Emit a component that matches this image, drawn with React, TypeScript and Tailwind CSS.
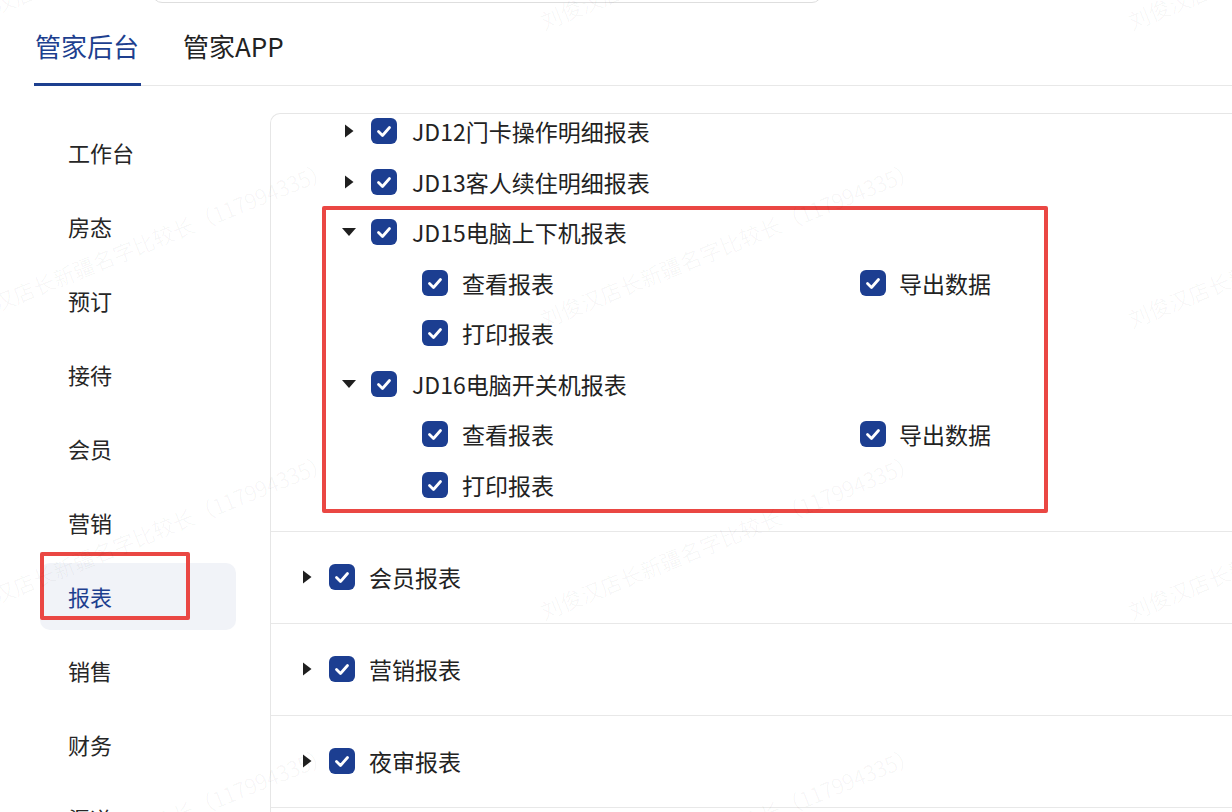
import React from "react";

const FONT = "font-['Noto_Sans_CJK_SC','Noto_Sans',sans-serif]";

function Check() {
  return (
    <div className="w-[26px] h-[26px] rounded-[6px] bg-[#1c3e91] flex items-center justify-center shrink-0">
      <svg width="26" height="26" viewBox="0 0 26 26">
        <polyline points="7.5,13.5 11.5,17.5 18.5,9.5" fill="none" stroke="white" strokeWidth="2.8" strokeLinecap="round" strokeLinejoin="round" />
      </svg>
    </div>
  );
}

function Tri({ down }: { down?: boolean }) {
  return (
    <div className="w-[16px] h-[16px] flex items-center justify-center shrink-0">
      {down ? (
        <svg width="16" height="10" viewBox="0 0 16 10"><polygon points="1,1 15,1 8,9" fill="#1f1f1f" /></svg>
      ) : (
        <svg width="10" height="14" viewBox="0 0 10 14"><polygon points="1,0.5 9.5,7 1,13.5" fill="#1f1f1f" /></svg>
      )}
    </div>
  );
}

function L2Row({ label, down }: { label: string; down?: boolean }) {
  return (
    <div className="h-[50.5px] flex items-center pl-[70px]">
      <Tri down={down} />
      <div className="ml-[14px]"><Check /></div>
      <span className="ml-[15px] text-[23px] text-[#222]">{label}</span>
    </div>
  );
}

function ChildRow({ a, b }: { a: string; b?: string }) {
  return (
    <div className="h-[50.5px] flex items-center pl-[151px]">
      <div className="w-[438px] flex items-center">
        <Check />
        <span className="ml-[14px] text-[23px] text-[#222]">{a}</span>
      </div>
      {b && (
        <div className="flex items-center">
          <Check />
          <span className="ml-[13px] text-[23px] text-[#222]">{b}</span>
        </div>
      )}
    </div>
  );
}

function L1Group({ label }: { label: string }) {
  return (
    <div className="h-[92px] border-b border-[#e8e8e8] flex items-center pl-[28px] pb-[1px]">
      <Tri />
      <div className="ml-[14px]"><Check /></div>
      <span className="ml-[14px] text-[23px] text-[#222]">{label}</span>
    </div>
  );
}

const sideItems = ["工作台", "房态", "预订", "接待", "会员", "营销", "报表", "销售", "财务", "渠道"];

const WM = "刘俊汉店长新疆名字比较长（117994335）";
const wmCols = [-42, 545, 1133];
const wmRows = [32, 330, 622, 915];

export default function App() {
  return (
    <div className={`relative w-[1232px] h-[812px] overflow-hidden bg-white ${FONT}`}>
      {/* top search box partially visible */}
      <div className="ml-[152px] w-[670px] h-[44px] -mt-[41px] border border-[#dedede] rounded-[10px]" />

      {/* tabs */}
      <div className="ml-[34px] h-[83px] flex items-start border-b border-[#e8e8e8]">
        <div className="w-[107px] h-[83px] pt-[4px] flex items-center border-b-[3px] border-[#1d3f8f] text-[26px] text-[#1d3f8f] pl-[1px]">
          管家后台
        </div>
        <div className="ml-[42px] h-[80px] pt-[4px] flex items-center text-[26px] text-[#222]">管家APP</div>
      </div>

      {/* main */}
      <div className="mt-[27px] flex h-[699px]">
        <div className="w-[270px] shrink-0 pt-[6px] pl-[40px] flex flex-col gap-[7px]">
          {sideItems.map((s) => {
            const active = s === "报表";
            return (
              <div
                key={s}
                className={`relative w-[196px] h-[67px] shrink-0 rounded-[10px] pl-[28px] flex items-center text-[22px] ${
                  active ? "bg-[#f1f3f8] text-[#1d3f8f]" : "text-[#262626]"
                }`}
              >
                {s}
                {active && (
                  <div className="absolute -top-[11px] left-0 w-[150px] h-[68px] border-[4px] border-[#ea4743] rounded-[2px]" />
                )}
              </div>
            );
          })}
        </div>

        <div className="relative flex-1 border-l border-t border-[#e6e6e6] rounded-tl-[10px] overflow-hidden">
          <div className="-mt-[8px] pb-[21px] border-b border-[#e8e8e8]">
            <L2Row label="JD12门卡操作明细报表" />
            <L2Row label="JD13客人续住明细报表" />
            <L2Row label="JD15电脑上下机报表" down />
            <ChildRow a="查看报表" b="导出数据" />
            <ChildRow a="打印报表" />
            <L2Row label="JD16电脑开关机报表" down />
            <ChildRow a="查看报表" b="导出数据" />
            <ChildRow a="打印报表" />
          </div>
          <L1Group label="会员报表" />
          <L1Group label="营销报表" />
          <L1Group label="夜审报表" />
          <div className="absolute left-[51px] top-[92px] w-[726px] h-[307px] border-[4px] border-[#ea4743] rounded-[2px]" />
        </div>
      </div>

      {/* watermark */}
      <div className="absolute inset-0 pointer-events-none">
        {wmRows.map((y) =>
          wmCols.map((x) => (
            <span
              key={`${x}-${y}`}
              className="absolute whitespace-nowrap text-[21.5px] leading-[22px] font-light text-black/[0.055] origin-bottom-left -rotate-[22deg]"
              style={{ left: x, top: y - 22 }}
            >
              {WM}
            </span>
          ))
        )}
      </div>
    </div>
  );
}
